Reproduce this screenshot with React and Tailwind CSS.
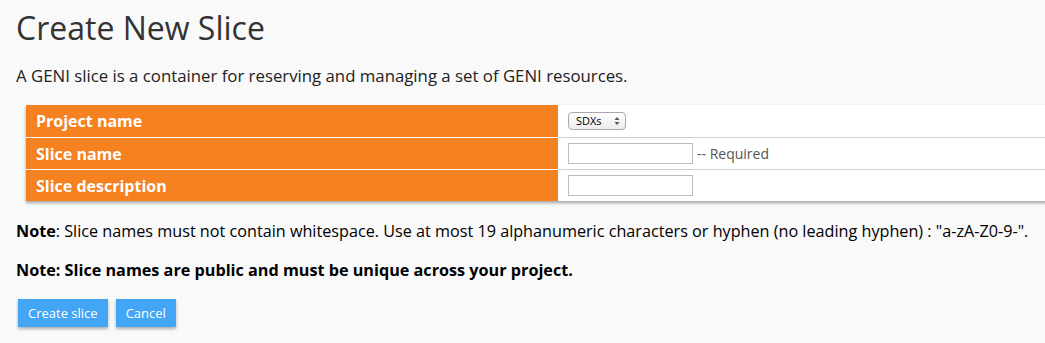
export default function App() {
  const rows = [
    { label: "Project name", kind: "select" },
    { label: "Slice name", kind: "required" },
    { label: "Slice description", kind: "input" },
  ];

  return (
    <div
      className="w-[1045px] h-[343px] overflow-hidden bg-[#f9f9f9] text-[#222]"
      style={{ fontFamily: '"Open Sans", sans-serif' }}
    >
      <div className="pl-[16px] pt-[7px]">
        <h1 className="text-[32px] leading-[42px] text-[#333]">Create New Slice</h1>
        <p className="mt-[16px] text-[16.8px] leading-[22px] text-[#222]">
          A GENI slice is a container for reserving and managing a set of GENI resources.
        </p>
      </div>

      {/* Form table */}
      <div className="ml-[26px] mt-[18px] w-[1030px] shadow-[0_2px_3px_rgba(0,0,0,0.35)]">
        {rows.map((row, i) => (
          <div
            key={row.label}
            className={`flex h-[32px] ${i > 0 ? "border-t border-[#cfcfcf]" : ""}`}
          >
            <div
              className={`w-[532px] shrink-0 bg-[#f68121] pl-[10px] flex items-center text-white font-bold text-[16px] ${i > 0 ? "border-t border-white -mt-px" : ""}`}
            >
              {row.label}
            </div>
            <div className="flex-1 bg-white pl-[10px] flex items-center">
              {row.kind === "select" && (
                <div className="h-[18px] w-[58px] rounded-[4px] border border-[#a9a9a9] bg-gradient-to-b from-white to-[#ececec] flex items-center justify-between pl-[7px] pr-[5px] text-[11px] text-black">
                  <span>SDXs</span>
                  <svg width="6" height="10" viewBox="0 0 6 10">
                    <path d="M0.5 4 L3 1 L5.5 4 Z" fill="#555" />
                    <path d="M0.5 6 L3 9 L5.5 6 Z" fill="#555" />
                  </svg>
                </div>
              )}
              {row.kind === "required" && (
                <>
                  <input className="h-[21px] w-[125px] border border-[#bdbdbd] bg-white outline-none" />
                  <span className="ml-[4px] text-[14px] text-[#555]">-- Required</span>
                </>
              )}
              {row.kind === "input" && (
                <input className="h-[21px] w-[125px] border border-[#bdbdbd] bg-white outline-none" />
              )}
            </div>
          </div>
        ))}
      </div>

      <div className="pl-[16px] text-[16.2px] leading-[20px] text-black">
        <p className="mt-[20px]">
          <b>Note</b>: Slice names must not contain whitespace. Use at most 19 alphanumeric characters or hyphen (no leading hyphen) : "a-zA-Z0-9-".
        </p>
        <p className="mt-[19px] font-bold">
          Note: Slice names are public and must be unique across your project.
        </p>
        <div className="mt-[19px] flex gap-[8px] pl-[2px]">
          <button className="h-[28px] px-[10px] bg-[#42a5f5] text-white text-[13px] shadow-[0_2px_3px_rgba(0,0,0,0.3)]">
            Create slice
          </button>
          <button className="h-[28px] px-[10px] bg-[#42a5f5] text-white text-[13px] shadow-[0_2px_3px_rgba(0,0,0,0.3)]">
            Cancel
          </button>
        </div>
      </div>
    </div>
  );
}
